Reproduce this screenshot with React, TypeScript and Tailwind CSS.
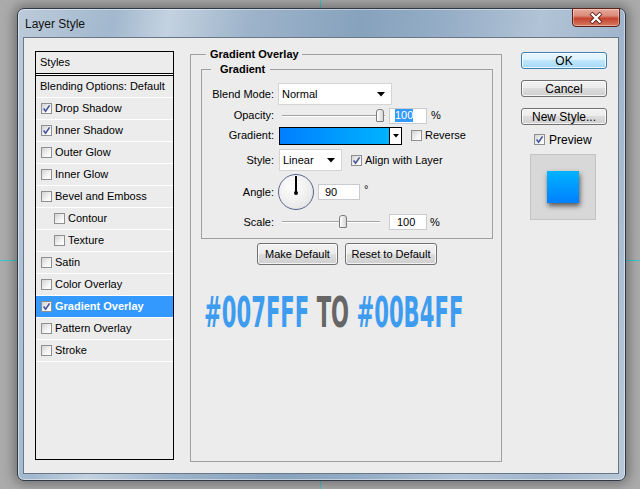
import type { ReactNode } from "react"

const STYLES = [
  { label: "Drop Shadow", checked: true },
  { label: "Inner Shadow", checked: true },
  { label: "Outer Glow" },
  { label: "Inner Glow" },
  { label: "Bevel and Emboss" },
  { label: "Contour", indent: true },
  { label: "Texture", indent: true },
  { label: "Satin" },
  { label: "Color Overlay" },
  { label: "Gradient Overlay", checked: true, active: true },
  { label: "Pattern Overlay" },
  { label: "Stroke" },
]

function Check({ checked }: { checked?: boolean }) {
  return (
    <span className="flex h-[11px] w-[11px] shrink-0 items-center justify-center border border-[#8e8f8f] bg-[linear-gradient(135deg,#d2d2d2,#f4f4f4_60%,#ffffff)]">
      {checked && (
        <svg width="9" height="9" viewBox="0 0 9 9">
          <path d="M1.6 4.6 L3.6 7.2 L7.6 1.4" fill="none" stroke="#44549a" strokeWidth="1.6" />
        </svg>
      )}
    </span>
  )
}

function Arrow() {
  return (
    <svg width="8" height="5" viewBox="0 0 8 5">
      <path d="M0 0 H8 L4 4.5 Z" fill="#000" />
    </svg>
  )
}

function WinButton({ children, className, focused }: { children: ReactNode; className: string; focused?: boolean }) {
  return (
    <div
      className={`flex items-center justify-center rounded-[3px] border shadow-[inset_0_0_0_1px_rgba(255,255,255,0.75)] ${
        focused
          ? "border-[#3c7fb1] bg-[linear-gradient(#eaf6fd,#d9f0fc_50%,#bee6fd_50%,#a7d9f5)]"
          : "border-[#707070] bg-[linear-gradient(#f2f2f2,#ebebeb_50%,#dddddd_50%,#cfcfcf)]"
      } ${className}`}
    >
      {children}
    </div>
  )
}

function Slider({ width, thumb }: { width: string; thumb: number }) {
  return (
    <div className={`relative h-[14px] ${width}`}>
      <div className="absolute left-0 right-0 top-[6px] h-[2px] border-t border-[#a4a4a4] bg-white" />
      <div
        className="absolute top-0 h-[13px] w-[8px] rounded-t-[3px] rounded-b-[1px] border border-[#7c7c7c] bg-[linear-gradient(90deg,#ffffff,#d6d6d6)]"
        style={{ left: thumb }}
      />
    </div>
  )
}

function Field({ children, className }: { children: ReactNode; className: string }) {
  return (
    <div className={`flex h-[16px] items-center border border-[#c9cbd0] bg-white text-[11px] ${className}`}>
      {children}
    </div>
  )
}

function Row({ label, className, children }: { label: string; className: string; children: ReactNode }) {
  return (
    <div className={`flex items-center ${className}`}>
      <span className="w-[72px] shrink-0 text-right">{label}</span>
      {children}
    </div>
  )
}

export default function App() {
  return (
    <div className="relative h-[489px] w-[640px] overflow-hidden bg-[#ababab] font-['Liberation_Sans',Arial,sans-serif] text-[11px] text-black">
      <div className="absolute left-[320px] top-0 h-full w-px bg-[#3cc6cf]" />
      <div className="absolute left-0 top-[260px] h-px w-full bg-[#3cc6cf]" />

      <div className="relative pl-[17px] pt-[8px]">
        <div className="flex h-[473px] w-[609px] flex-col rounded-[7px] border border-[#2f3a46] bg-[linear-gradient(100deg,#bccbda_0%,#a2b8ce_14%,#c3d2e0_22%,#9db3ca_34%,#87a2bd_50%,#95adc6_62%,#b1c3d6_76%,#a0b5cc_88%,#b9c9d8_100%)] shadow-[0_0_12px_3px_rgba(0,0,0,0.35),inset_0_0_0_1px_rgba(255,255,255,0.45)]">
          <div className="flex h-[28px] shrink-0 items-start justify-between pl-[7px] pr-[5px]">
            <span className="mt-[6px] text-[12px] text-[#111]">Layer Style</span>
            <div className="-mt-px flex h-[19px] w-[48px] items-center justify-center rounded-b-[4px] border border-[#5c2117] bg-[linear-gradient(#eaa99c,#d98a78_40%,#c4432d_55%,#d77a64)] shadow-[inset_0_0_0_1px_rgba(255,255,255,0.35)]">
              <svg width="14" height="12" viewBox="0 0 14 12">
                <path d="M2 1 L12 11 M12 1 L2 11" stroke="#5a2018" strokeWidth="4" />
                <path d="M2.5 1.5 L11.5 10.5 M11.5 1.5 L2.5 10.5" stroke="#fff" strokeWidth="2.4" />
              </svg>
            </div>
          </div>

          <div className="mb-[6px] ml-[5px] mr-[6px] flex flex-1 items-start border border-[#687888] bg-[#ececec] pl-[11px] pt-[9px]">
            {/* styles list */}
            <div className="mt-[4px] h-[409px] w-[139px] shrink-0 border border-black bg-[#ececec]">
              <div className="flex h-[21px] items-center pl-[4px]">Styles</div>
              <div className="h-px bg-black" />
              <div className="h-px bg-white" />
              <div className="h-px bg-black" />
              <div className="flex h-[22px] items-center border-b border-white pl-[4px]">Blending Options: Default</div>
              {STYLES.map((s) => (
                <div
                  key={s.label}
                  className={`flex h-[22px] items-center border-b border-white ${s.indent ? "pl-[18px]" : "pl-[5px]"} ${
                    s.active ? "bg-[#3399ff] font-bold text-white" : ""
                  }`}
                >
                  <Check checked={s.checked} />
                  <span className="ml-[3px]">{s.label}</span>
                </div>
              ))}
            </div>

            {/* gradient overlay group */}
            <fieldset className="ml-[16px] h-[415px] w-[312px] min-w-0 shrink-0 border border-[#a0a0a0] pl-[10px] pr-[8px]">
              <legend className="ml-[5px] pl-[4px] pr-[3px] text-[11px] font-bold leading-[14px]">Gradient Overlay</legend>

              <fieldset className="mt-px h-[177px] w-[292px] min-w-0 border border-[#a0a0a0]">
                <legend className="ml-[9px] pl-[9px] pr-[5px] text-[11px] font-bold leading-[14px]">Gradient</legend>
                <div className="flex flex-col pt-[6px]">
                  <Row label="Blend Mode:" className="h-[24px]">
                    <div className="ml-[4px] flex h-[22px] w-[114px] items-center justify-between border border-[#d4d4d4] bg-white pl-[3px] pr-[6px]">
                      Normal
                      <Arrow />
                    </div>
                  </Row>
                  <Row label="Opacity:" className="h-[19px]">
                    <div className="ml-[8px]">
                      <Slider width="w-[103px]" thumb={94} />
                    </div>
                    <Field className="ml-[4px] w-[38px] pl-[5px]">
                      <span className="bg-[#3399ff] leading-[13px] text-white">100</span>
                    </Field>
                    <span className="ml-[4px]">%</span>
                  </Row>
                  <Row label="Gradient:" className="h-[21px]">
                    <div className="ml-[5px] flex h-[18px] w-[123px] border border-black bg-white">
                      <div className="flex-1 bg-[linear-gradient(90deg,#007fff,#00b4ff)]" />
                      <div className="flex w-[12px] items-center justify-center border-l border-black">
                        <svg width="6" height="4" viewBox="0 0 6 4">
                          <path d="M0 0 H6 L3 3.5 Z" fill="#000" />
                        </svg>
                      </div>
                    </div>
                    <span className="ml-[9px]">
                      <Check />
                    </span>
                    <span className="ml-[3px]">Reverse</span>
                  </Row>
                  <Row label="Style:" className="h-[28px]">
                    <div className="ml-[5px] flex h-[22px] w-[63px] items-center justify-between border border-[#d4d4d4] bg-white pl-[3px] pr-[6px]">
                      Linear
                      <Arrow />
                    </div>
                    <span className="ml-[9px]">
                      <Check checked />
                    </span>
                    <span className="ml-[3px]">Align with Layer</span>
                  </Row>
                  <Row label="Angle:" className="h-[36px]">
                    <div className="relative ml-[4px] h-[36px] w-[36px] rounded-full border-[1.5px] border-[#56668c] bg-[radial-gradient(circle_at_40%_35%,#ffffff,#ebebeb_65%,#d2d2d2)]">
                      <div className="absolute left-[16px] top-[1px] h-[17px] w-[1.5px] bg-black" />
                      <div className="absolute left-[15px] top-[16px] h-[3.5px] w-[3.5px] rounded-full bg-black" />
                    </div>
                    <Field className="ml-[4px] w-[42px] pl-[6px]">90</Field>
                    <span className="ml-[4px] -translate-y-[3px]">°</span>
                  </Row>
                  <Row label="Scale:" className="h-[24px]">
                    <div className="ml-[8px]">
                      <Slider width="w-[98px]" thumb={57} />
                    </div>
                    <Field className="ml-[9px] w-[38px] pl-[7px]">100</Field>
                    <span className="ml-[3px]">%</span>
                  </Row>
                </div>
              </fieldset>

              <div className="mt-[4px] flex justify-center gap-[7px]">
                <WinButton className="h-[22px] w-[81px]">Make Default</WinButton>
                <WinButton className="h-[22px] w-[92px]">Reset to Default</WinButton>
              </div>

              <div className="ml-[3px] mt-[27px] w-[260px] whitespace-nowrap font-['DejaVu_Sans_Condensed','Liberation_Sans',sans-serif] text-[42px] font-bold leading-[42px]">
                <span className="inline-block origin-left scale-x-[0.56]">
                  <span className="text-[#3d9cf0]">#007FFF</span> <span className="text-[#666666]">TO</span>{" "}
                  <span className="text-[#3d9cf0]">#00B4FF</span>
                </span>
              </div>
            </fieldset>

            {/* right column */}
            <div className="ml-[19px] mt-[5px] flex w-[86px] shrink-0 flex-col text-[12px]">
              <WinButton focused className="h-[17px]">OK</WinButton>
              <WinButton className="mt-[11px] h-[17px]">Cancel</WinButton>
              <WinButton className="mt-[11px] h-[17px]">New Style...</WinButton>
              <div className="ml-[13px] mt-[9px] flex h-[11px] items-center">
                <Check checked />
                <span className="ml-[4px]">Preview</span>
              </div>
              <div className="ml-[9px] mt-[9px] flex h-[66px] w-[66px] items-center justify-center border border-[#c4c4c4] bg-[#d8d8d8]">
                <div className="h-[32px] w-[32px] bg-[linear-gradient(#00b4ff,#007fff)] shadow-[1px_3px_5px_rgba(0,0,0,0.6)]" />
              </div>
            </div>
          </div>
        </div>
      </div>
    </div>
  )
}
